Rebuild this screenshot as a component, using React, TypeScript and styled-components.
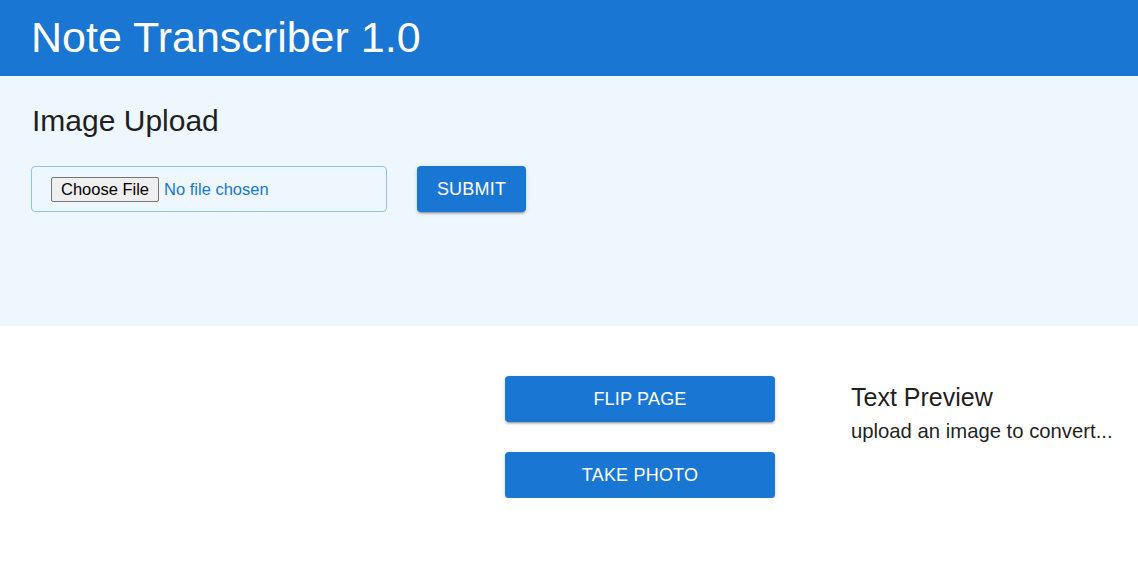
import styled, { createGlobalStyle } from 'styled-components';

const GlobalStyle = createGlobalStyle`
  html, body {
    margin: 0;
    padding: 0;
    background: #ffffff;
    font-family: "Liberation Sans", Arial, sans-serif;
  }
`;

const Header = styled.header`
  height: 76px;
  background-color: #1976d2;
  display: flex;
  align-items: center;
  padding-left: 31px;
`;

const Title = styled.h1`
  margin: 0 0 2px;
  color: #ffffff;
  font-size: 43px;
  font-weight: 400;
  line-height: 1;
`;

const UploadSection = styled.section`
  height: 250px;
  box-sizing: border-box;
  background-color: #eef6fe;
  padding: 27px 31px 0;
`;

const SectionTitle = styled.h2`
  margin: 0 0 27px;
  font-size: 30px;
  font-weight: 400;
  line-height: 36px;
  color: #1f1f1f;
  padding-left: 1px;
`;

const UploadRow = styled.div`
  display: flex;
  align-items: center;
  gap: 30px;
`;

const FileBox = styled.div`
  width: 356px;
  height: 46px;
  box-sizing: border-box;
  border: 1px solid #8fc1f1;
  border-radius: 4px;
  display: flex;
  align-items: center;
  padding-left: 19px;
`;

const FileInput = styled.input`
  font-family: "Liberation Sans", Arial, sans-serif;
  font-size: 16.5px;
  color: #1976d2;

  &::file-selector-button {
    font-family: "Liberation Sans", Arial, sans-serif;
    font-size: 16.5px;
    color: #000000;
    background: #efefef;
    border: 1px solid #767676;
    border-radius: 2px;
    padding: 2px 9px;
    margin-right: 5px;
  }
`;

const Button = styled.button<{ $wide?: boolean }>`
  width: ${(p) => (p.$wide ? '270px' : '109px')};
  height: 46px;
  border: none;
  border-radius: 4px;
  background-color: #1976d2;
  color: #ffffff;
  font-family: "Liberation Sans", Arial, sans-serif;
  font-size: 18px;
  font-weight: 400;
  text-transform: uppercase;
  letter-spacing: 0.2px;
  box-shadow: 0px 3px 1px -2px rgba(0,0,0,0.2), 0px 2px 2px 0px rgba(0,0,0,0.14), 0px 1px 5px 0px rgba(0,0,0,0.12);
  cursor: pointer;
`;

const Workspace = styled.main`
  display: flex;
  padding: 50px 0 0 505px;
  gap: 76px;
`;

const ButtonColumn = styled.div`
  display: flex;
  flex-direction: column;
  gap: 30px;
`;

const Preview = styled.div`
  padding-top: 6px;
`;

const PreviewTitle = styled.h3`
  margin: 0 0 6px;
  font-size: 25px;
  font-weight: 400;
  line-height: 30px;
  color: #1f1f1f;
`;

const PreviewText = styled.p`
  margin: 0;
  font-size: 20.3px;
  line-height: 26px;
  color: #1f1f1f;
`;

export default function App() {
  return (
    <>
      <GlobalStyle />
      <Header>
        <Title>Note Transcriber 1.0</Title>
      </Header>
      <UploadSection>
        <SectionTitle>Image Upload</SectionTitle>
        <UploadRow>
          <FileBox>
            <FileInput type="file" accept="image/*" />
          </FileBox>
          <Button>Submit</Button>
        </UploadRow>
      </UploadSection>
      <Workspace>
        <ButtonColumn>
          <Button $wide>Flip Page</Button>
          <Button $wide>Take Photo</Button>
        </ButtonColumn>
        <Preview>
          <PreviewTitle>Text Preview</PreviewTitle>
          <PreviewText>upload an image to convert...</PreviewText>
        </Preview>
      </Workspace>
    </>
  );
}
